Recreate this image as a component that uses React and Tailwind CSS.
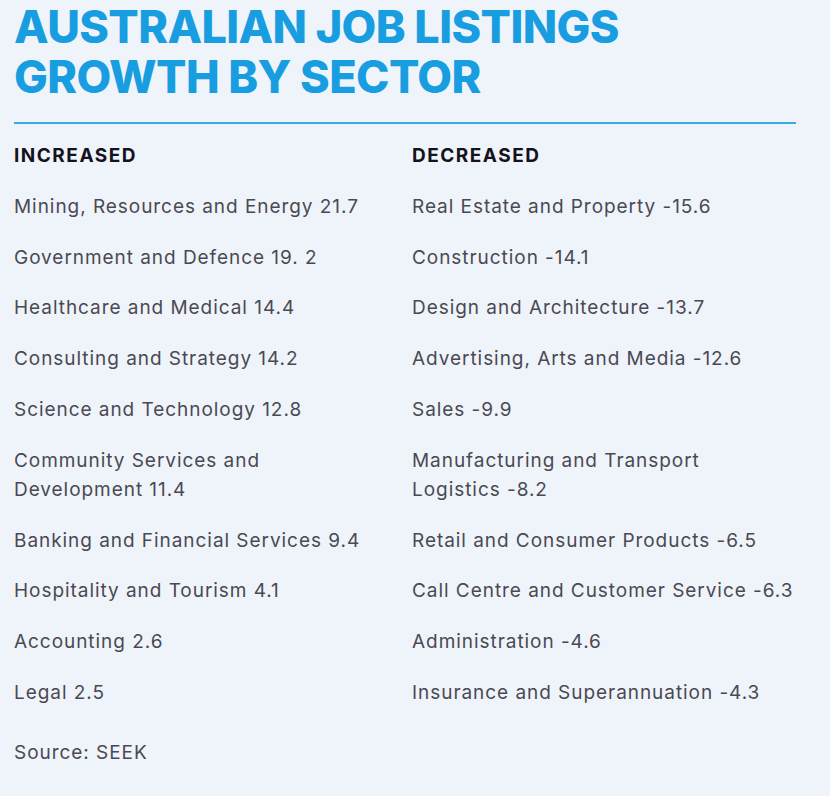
import React from "react";

const increased = [
    "Mining, Resources and Energy 21.7",
    "Government and Defence 19. 2",
    "Healthcare and Medical 14.4",
    "Consulting and Strategy 14.2",
    "Science and Technology 12.8",
    ["Community Services and", "Development 11.4"],
    "Banking and Financial Services 9.4",
    "Hospitality and Tourism 4.1",
    "Accounting 2.6",
    "Legal 2.5",
];

const decreased = [
    "Real Estate and Property -15.6",
    "Construction -14.1",
    "Design and Architecture -13.7",
    "Advertising, Arts and Media -12.6",
    "Sales -9.9",
    ["Manufacturing and Transport", "Logistics -8.2"],
    "Retail and Consumer Products -6.5",
    "Call Centre and Customer Service -6.3",
    "Administration -4.6",
    "Insurance and Superannuation -4.3",
];

function Column({title, items}) {
    return (
        <div className="flex flex-col">
            <h3 className="text-[19px] leading-[29px] font-bold tracking-[1.5px] text-[#14121c] mb-[21.8px]">
                {title}
            </h3>
            <ul className="flex flex-col gap-[21.8px]">
                {items.map((item, i) => (
                    <li key={i} className="text-[19px] leading-[29px] tracking-[0.95px] text-[#4a4953] whitespace-nowrap">
                        {Array.isArray(item)
                            ? <>{item[0]}<br/>{item[1]}</>
                            : item}
                    </li>
                ))}
            </ul>
        </div>
    );
}

export default function App() {
    return (
        <div className="w-[830px] h-[796px] bg-[#eff4fa] font-['Inter',sans-serif] overflow-hidden">
            <div className="pl-[14px] pr-[34px] pt-[2px]">
                <h1 className="text-[45px] leading-[50px] font-extrabold tracking-[-0.6px] text-[#189ee0]">
                    AUSTRALIAN JOB LISTINGS<br/>GROWTH BY SECTOR
                </h1>
                <hr className="mt-[20px] border-0 h-[2px] bg-[#3aa9e2]"/>
                <div className="grid grid-cols-[398px_1fr] mt-[17px]">
                    <Column title="INCREASED" items={increased}/>
                    <Column title="DECREASED" items={decreased}/>
                </div>
                <p className="mt-[31px] text-[19px] leading-[29px] tracking-[0.95px] text-[#4a4953]">Source: SEEK</p>
            </div>
        </div>
    );
}
